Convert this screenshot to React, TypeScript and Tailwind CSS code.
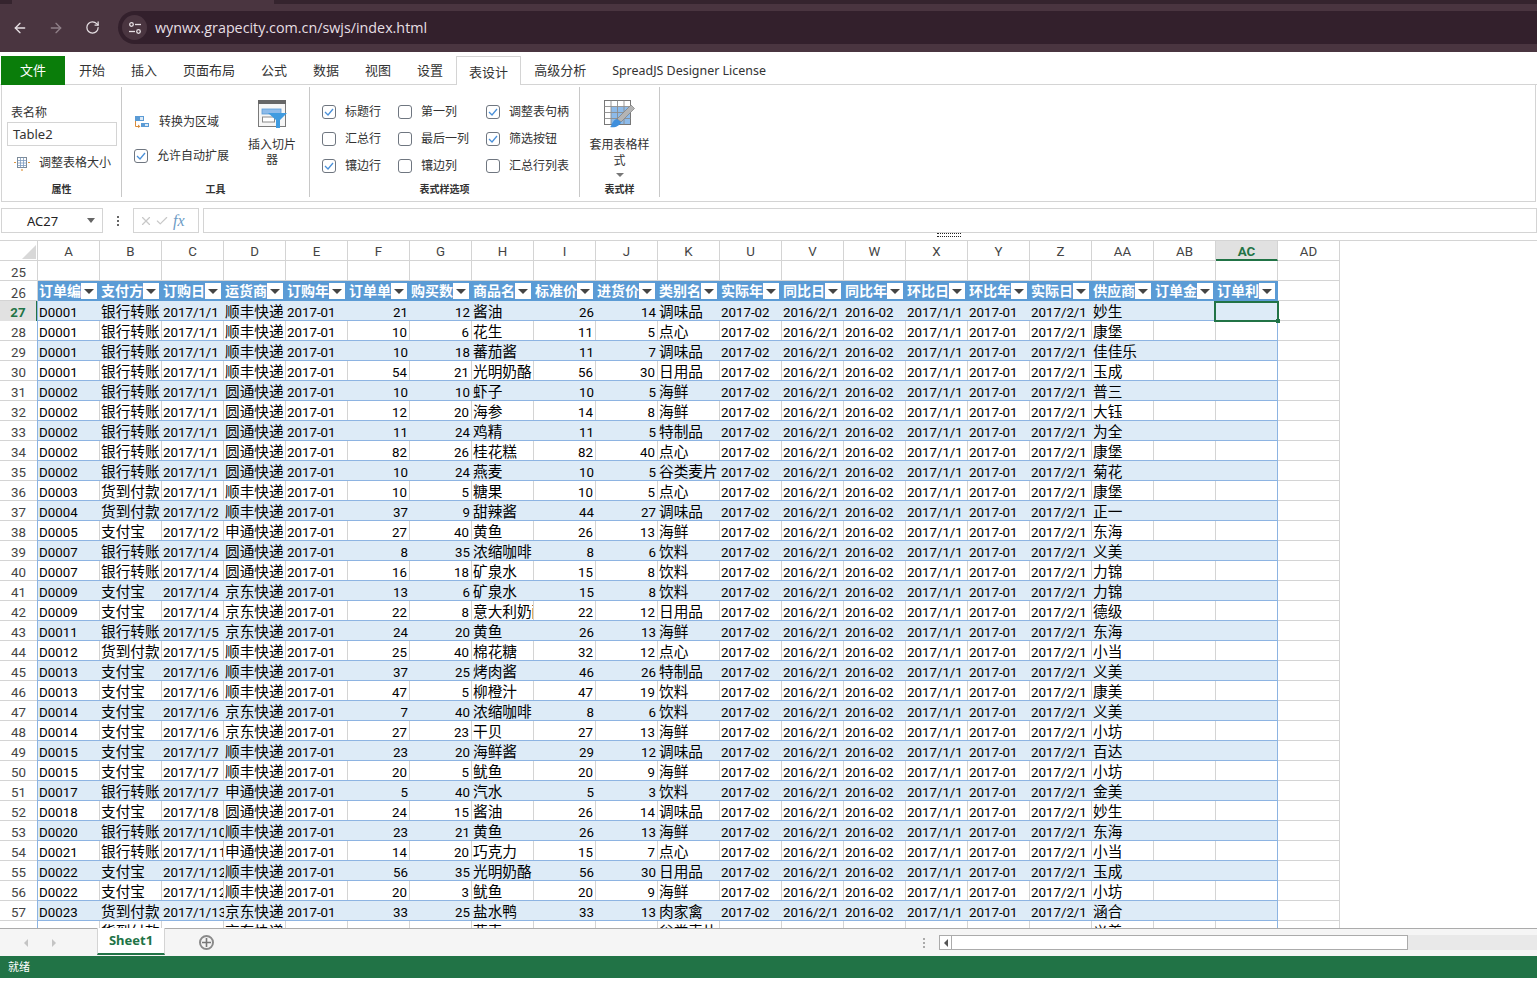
import React from "react";
import { ArrowLeft, ArrowRight, RotateCw, Check, X } from "lucide-react";

const uiFont = "font-['Noto_Sans','Noto_Sans_CJK_SC',sans-serif]";

const columns = ["A", "B", "C", "D", "E", "F", "G", "H", "I", "J", "K", "U", "V", "W", "X", "Y", "Z", "AA", "AB", "AC"];
const headers = ["订单编号", "支付方式", "订购日期", "运货商", "订购年月", "订单单价", "购买数量", "商品名称", "标准价格", "进货价格", "类别名称", "实际年月", "同比日期", "同比年月", "环比日期", "环比年月", "实际日期", "供应商", "订单金额", "订单利润"];

// id, pay, date, carrier, price, qty, product, std, cost, category, supplier
const rows: [string, string, string, string, number, number, string, number, number, string, string][] = [
  ["D0001", "银行转账", "2017/1/1", "顺丰快递", 21, 12, "酱油", 26, 14, "调味品", "妙生"],
  ["D0001", "银行转账", "2017/1/1", "顺丰快递", 10, 6, "花生", 11, 5, "点心", "康堡"],
  ["D0001", "银行转账", "2017/1/1", "顺丰快递", 10, 18, "蕃茄酱", 11, 7, "调味品", "佳佳乐"],
  ["D0001", "银行转账", "2017/1/1", "顺丰快递", 54, 21, "光明奶酪", 56, 30, "日用品", "玉成"],
  ["D0002", "银行转账", "2017/1/1", "圆通快递", 10, 10, "虾子", 10, 5, "海鲜", "普三"],
  ["D0002", "银行转账", "2017/1/1", "圆通快递", 12, 20, "海参", 14, 8, "海鲜", "大钰"],
  ["D0002", "银行转账", "2017/1/1", "圆通快递", 11, 24, "鸡精", 11, 5, "特制品", "为全"],
  ["D0002", "银行转账", "2017/1/1", "圆通快递", 82, 26, "桂花糕", 82, 40, "点心", "康堡"],
  ["D0002", "银行转账", "2017/1/1", "圆通快递", 10, 24, "燕麦", 10, 5, "谷类麦片", "菊花"],
  ["D0003", "货到付款", "2017/1/1", "顺丰快递", 10, 5, "糖果", 10, 5, "点心", "康堡"],
  ["D0004", "货到付款", "2017/1/2", "顺丰快递", 37, 9, "甜辣酱", 44, 27, "调味品", "正一"],
  ["D0005", "支付宝", "2017/1/2", "申通快递", 27, 40, "黄鱼", 26, 13, "海鲜", "东海"],
  ["D0007", "银行转账", "2017/1/4", "圆通快递", 8, 35, "浓缩咖啡", 8, 6, "饮料", "义美"],
  ["D0007", "银行转账", "2017/1/4", "圆通快递", 16, 18, "矿泉水", 15, 8, "饮料", "力锦"],
  ["D0009", "支付宝", "2017/1/4", "京东快递", 13, 6, "矿泉水", 15, 8, "饮料", "力锦"],
  ["D0009", "支付宝", "2017/1/4", "京东快递", 22, 8, "意大利奶酪", 22, 12, "日用品", "德级"],
  ["D0011", "银行转账", "2017/1/5", "京东快递", 24, 20, "黄鱼", 26, 13, "海鲜", "东海"],
  ["D0012", "货到付款", "2017/1/5", "顺丰快递", 25, 40, "棉花糖", 32, 12, "点心", "小当"],
  ["D0013", "支付宝", "2017/1/6", "顺丰快递", 37, 25, "烤肉酱", 46, 26, "特制品", "义美"],
  ["D0013", "支付宝", "2017/1/6", "顺丰快递", 47, 5, "柳橙汁", 47, 19, "饮料", "康美"],
  ["D0014", "支付宝", "2017/1/6", "京东快递", 7, 40, "浓缩咖啡", 8, 6, "饮料", "义美"],
  ["D0014", "支付宝", "2017/1/6", "京东快递", 27, 23, "干贝", 27, 13, "海鲜", "小坊"],
  ["D0015", "支付宝", "2017/1/7", "顺丰快递", 23, 20, "海鲜酱", 29, 12, "调味品", "百达"],
  ["D0015", "支付宝", "2017/1/7", "顺丰快递", 20, 5, "鱿鱼", 20, 9, "海鲜", "小坊"],
  ["D0017", "银行转账", "2017/1/7", "申通快递", 5, 40, "汽水", 5, 3, "饮料", "金美"],
  ["D0018", "支付宝", "2017/1/8", "圆通快递", 24, 15, "酱油", 26, 14, "调味品", "妙生"],
  ["D0020", "银行转账", "2017/1/10", "顺丰快递", 23, 21, "黄鱼", 26, 13, "海鲜", "东海"],
  ["D0021", "银行转账", "2017/1/11", "申通快递", 14, 20, "巧克力", 15, 7, "点心", "小当"],
  ["D0022", "支付宝", "2017/1/12", "顺丰快递", 56, 35, "光明奶酪", 56, 30, "日用品", "玉成"],
  ["D0022", "支付宝", "2017/1/12", "顺丰快递", 20, 3, "鱿鱼", 20, 9, "海鲜", "小坊"],
  ["D0023", "货到付款", "2017/1/13", "京东快递", 33, 25, "盐水鸭", 33, 13, "肉家禽", "涵合"],
  ["D0024", "货到付款", "2017/1/14", "京东快递", 10, 24, "燕麦", 10, 5, "谷类麦片", "义美"],
];

const Tune = () => (
  <svg width="14" height="14" viewBox="0 0 14 14" fill="none" stroke="#e6dfe3" strokeWidth="1.3">
    <circle cx="3.5" cy="3.5" r="1.8" />
    <path d="M7 3.5h6" />
    <circle cx="10.5" cy="10.5" r="1.8" />
    <path d="M1 10.5h6" />
  </svg>
);

const ConvertIcon = () => (
  <svg width="14" height="12" viewBox="0 0 14 12" className="shrink-0">
    <rect x="0" y="0" width="9" height="5" fill="#5b9bd5" />
    <rect x="5" y="1" width="3" height="3" fill="#dbe9f6" />
    <path d="M0.5 5v5.5h4" fill="none" stroke="#d98b3a" strokeWidth="1" />
    <path d="M3 8.5l2.5 2-2.5 1.5z" fill="#d98b3a" />
    <rect x="6" y="7" width="8" height="4" fill="#5b9bd5" />
    <rect x="10" y="8" width="3" height="2" fill="#dbe9f6" />
  </svg>
);

const ResizeIcon = () => (
  <svg width="16" height="16" viewBox="0 0 16 16" className="shrink-0">
    <rect x="3.5" y="2.5" width="9" height="10" fill="#fff" stroke="#7d8b99" />
    <path d="M3.5 5.5h9M3.5 8h9M3.5 10.5h9M6.5 2.5v10M9.5 2.5v10" stroke="#7d9cc0" strokeWidth="0.8" />
    <path d="M0 7.5h2M14 7.5h2M8 14v2" stroke="#e0963c" strokeWidth="1.2" />
  </svg>
);

const SlicerIcon = () => (
  <svg width="29" height="28" viewBox="0 0 29 28">
    <rect x="0.5" y="0.5" width="27" height="26" fill="#f6f6f6" stroke="#7a7a7a" />
    <rect x="0" y="0" width="28" height="4" fill="#666" />
    <rect x="4" y="9" width="19" height="5" fill="#8dbbea" stroke="#5b9bd5" strokeWidth="0.8" />
    <rect x="4.5" y="17" width="12" height="5" fill="#fff" stroke="#8a8a8a" />
    <path d="M10 13h19l-7 7v8h-4v-8z" fill="#3f9be0" />
  </svg>
);

const StyleIcon = () => (
  <svg width="31" height="28" viewBox="0 0 31 28">
    <rect x="0.5" y="0.5" width="26" height="24" fill="#fff" stroke="#777" />
    <rect x="7" y="7" width="19" height="17" fill="#8dbbea" />
    <path d="M0.5 6.5h26M0.5 12.5h26M0.5 18.5h26M7 0.5v24M13.5 0.5v24M20 0.5v24" stroke="#8c8c8c" strokeWidth="0.9" />
    <path d="M13 19L27 5l3.5 3.5L17 22z" fill="#b4b4b4" stroke="#7d7d7d" strokeWidth="0.7" />
    <path d="M6 27c2-1 2-7 7-8l4 3c-1 4-6 6-11 5z" fill="#3f8fdc" />
  </svg>
);

const Box = ({ checked }: { checked?: boolean }) => (
  <span className="w-[14px] h-[14px] shrink-0 rounded-[3px] border border-[#6f7680] bg-white flex items-center justify-center">
    {checked && (
      <svg width="10" height="8" viewBox="0 0 10 8" fill="none" stroke="#4a90d9" strokeWidth="1.3">
        <path d="M1 4l3 3 5-6" />
      </svg>
    )}
  </span>
);

const Option = ({ label, checked }: { label: string; checked?: boolean }) => (
  <div className="flex items-center gap-[9px] h-[27px] whitespace-nowrap">
    <Box checked={checked} />
    <span>{label}</span>
  </div>
);

const RibbonGroup = ({ label, width, children }: { label: string; width: string; children: React.ReactNode }) => (
  <div className={`${width} h-[110px] mt-[2px] border-r border-[#c8c8c8] flex flex-col`}>
    <div className="flex-1 min-h-0">{children}</div>
    <div className="h-[17px] text-center text-[10px] font-bold leading-[19px] text-[#333]">{label}</div>
  </div>
);

const Ribbon = () => (
  <div className="h-[117px] mx-px border border-t-0 border-[#d4d4d4] flex text-[12px] text-[#333]">
    <RibbonGroup label="属性" width="w-[120px]">
      <div className="pt-[18px]">
        <div className="pl-[9px] leading-[16px]">表名称</div>
        <div className="ml-[5px] mt-px w-[110px] h-[24px] border border-[#d4d4d4] pl-[5px] text-[13px] leading-[22px]">Table2</div>
        <div className="flex items-center pl-[12px] mt-[8px] gap-[9px] whitespace-nowrap">
          <ResizeIcon />
          <span>调整表格大小</span>
        </div>
      </div>
    </RibbonGroup>
    <RibbonGroup label="工具" width="w-[188px]">
      <div className="flex">
        <div className="pl-[12px] w-[124px] pt-[26px]">
          <div className="flex items-center gap-[10px] h-[18px] pl-px whitespace-nowrap">
            <ConvertIcon />
            <span>转换为区域</span>
          </div>
          <div className="flex items-center gap-[9px] mt-[16px] whitespace-nowrap">
            <Box checked />
            <span>允许自动扩展</span>
          </div>
        </div>
        <div className="w-[52px] flex flex-col items-center pt-[13px] text-center leading-[15px]">
          <SlicerIcon />
          <div className="mt-[9px]">插入切片器</div>
        </div>
      </div>
    </RibbonGroup>
    <RibbonGroup label="表式样选项" width="w-[270px]">
      <div className="flex pl-[12px] pt-[11px]">
        <div className="w-[76px]">
          <Option label="标题行" checked />
          <Option label="汇总行" />
          <Option label="镶边行" checked />
        </div>
        <div className="w-[88px]">
          <Option label="第一列" />
          <Option label="最后一列" />
          <Option label="镶边列" />
        </div>
        <div>
          <Option label="调整表句柄" checked />
          <Option label="筛选按钮" checked />
          <Option label="汇总行列表" />
        </div>
      </div>
    </RibbonGroup>
    <RibbonGroup label="表式样" width="w-[80px]">
      <div className="flex flex-col items-center pt-[13px] text-center leading-[16px]">
        <StyleIcon />
        <div className="mt-[9px] w-[62px]">套用表格样式</div>
        <span className="mt-[4px] w-0 h-0 border-x-[4px] border-x-transparent border-t-[4px] border-t-[#777]" />
      </div>
    </RibbonGroup>
  </div>
);

const FilterButton = () => (
  <span className="absolute right-[3px] top-[2px] w-[16px] h-[16px] bg-white flex items-center justify-center">
    <span className="w-0 h-0 border-x-[5px] border-x-transparent border-t-[5px] border-t-[#444]" />
  </span>
);

const RowHead = ({ n, active }: { n: number; active?: boolean }) => (
  <div
    className={`w-[38px] shrink-0 h-full pt-[4px] flex items-center justify-center border-r text-[13.3px] ${
      active ? "bg-[#e1e1e1] text-[#217346] font-bold border-r-2 border-[#217346]" : "text-[#444] border-[#d4d4d4] border-b border-b-[#d4d4d4]"
    }`}
  >
    {n}
  </div>
);

const Cell = ({ text, cjk, right, band }: { text?: string | number; cjk?: boolean; right?: boolean; band: boolean }) => (
  <div
    className={`w-[62px] shrink-0 h-full overflow-hidden whitespace-nowrap flex items-center text-black ${
      cjk ? "pt-[2px] pl-px text-[14.67px]" : "pt-[4px] text-[13.3px]"
    } ${right ? "justify-end pr-[2px]" : "pl-px"} ${band ? "" : "border-r border-[#d4d4d4]"}`}
  >
    {text}
  </div>
);

const DataRow = ({ row, n }: { row: (typeof rows)[number]; n: number }) => {
  const band = n % 2 === 1;
  const [id, pay, date, carrier, price, qty, product, std, cost, category, supplier] = row;
  return (
    <div className="flex h-[20px] font-['Roboto','Noto_Sans_CJK_SC',sans-serif]">
      <RowHead n={n} active={n === 27} />
      <div className={`flex h-full border-l border-r border-b border-[#8db4e2] -ml-px ${band ? "bg-[#ddebf7]" : "bg-white"}`}>
        <Cell band={band} text={id} />
        <Cell band={band} text={pay} cjk />
        <Cell band={band} text={date} />
        <Cell band={band} text={carrier} cjk />
        <Cell band={band} text="2017-01" />
        <Cell band={band} text={price} right />
        <Cell band={band} text={qty} right />
        <Cell band={band} text={product} cjk />
        <Cell band={band} text={std} right />
        <Cell band={band} text={cost} right />
        <Cell band={band} text={category} cjk />
        <Cell band={band} text="2017-02" />
        <Cell band={band} text="2016/2/1" />
        <Cell band={band} text="2016-02" />
        <Cell band={band} text="2017/1/1" />
        <Cell band={band} text="2017-01" />
        <Cell band={band} text="2017/2/1" />
        <Cell band={band} text={supplier} cjk />
        <Cell band={band} />
        <div className="relative w-[61px] shrink-0 h-full">
          {n === 27 && (
            <div className="absolute -left-[2px] top-0 w-[65px] h-[21px] border-2 border-[#217346]">
              <span className="absolute -right-[3px] -bottom-[3px] w-[4px] h-[4px] bg-[#217346]" />
            </div>
          )}
        </div>
      </div>
      <div className="w-[62px] shrink-0 h-full border-r border-b border-[#d4d4d4]" />
    </div>
  );
};

const Grid = () => (
  <div className="flex-1 min-h-0 overflow-hidden bg-white border-t border-[#d4d4d4]">
    <div className="flex h-[20px] font-['Roboto','Noto_Sans_CJK_SC',sans-serif] text-[13.3px] text-[#444]">
      <div className="relative w-[38px] shrink-0 border-r border-b border-[#d4d4d4]">
        <span className="absolute right-px bottom-px w-0 h-0 border-l-[14px] border-l-transparent border-b-[14px] border-b-[#d8d8d8]" />
      </div>
      {[...columns, "AD"].map((c) => (
        <div
          key={c}
          className={`w-[62px] shrink-0 pt-[3px] flex items-center justify-center border-r ${
            c === "AC" ? "bg-[#e1e1e1] text-[#217346] font-bold border-b-2 border-b-[#217346] border-r-[#d4d4d4]" : "border-b border-[#d4d4d4]"
          }`}
        >
          {c}
        </div>
      ))}
    </div>
    <div className="flex h-[20px] font-['Roboto','Noto_Sans_CJK_SC',sans-serif]">
      <RowHead n={25} />
      {[...columns, "AD"].map((c) => (
        <div key={c} className="w-[62px] shrink-0 border-r border-b border-[#d4d4d4]" />
      ))}
    </div>
    <div className="flex h-[20px] font-['Noto_Sans_CJK_SC',sans-serif]">
      <RowHead n={26} />
      <div className="flex h-full bg-[#5b9bd5] text-white text-[14px] font-bold">
        {headers.map((h) => (
          <div key={h} className="relative w-[62px] shrink-0 overflow-hidden whitespace-nowrap leading-[18px] pl-px">
            {h}
            <FilterButton />
          </div>
        ))}
      </div>
      <div className="w-[62px] shrink-0 h-full border-r border-b border-[#d4d4d4]" />
    </div>
    {rows.map((r, i) => (
      <DataRow key={i} row={r} n={27 + i} />
    ))}
  </div>
);

export default function App() {
  return (
    <div className={`h-[982px] overflow-hidden flex flex-col bg-white ${uiFont}`}>
      {/* browser chrome */}
      <div className="h-[52px] shrink-0 bg-[#4a3540] flex flex-col text-[#e6dfe3]">
        <div className="h-[4px] shrink-0 flex">
          <div className="w-[12px] bg-[#35242e]" />
          <div className="w-[262px]" />
          <div className="flex-1 bg-[#35242e]" />
        </div>
        <div className="flex-1 flex items-center pb-px">
          <ArrowLeft size={16} className="ml-[12px]" />
          <ArrowRight size={16} className="ml-[20px] text-[#8f7f88]" />
          <RotateCw size={15} className="ml-[21px]" />
          <div className="ml-[18px] h-[33px] flex-1 rounded-l-full bg-[#33202c] flex items-center pl-[4px]">
            <span className="w-[25px] h-[25px] rounded-full bg-[#4a3540] flex items-center justify-center">
              <Tune />
            </span>
            <span className="ml-[8px] text-[14.3px] font-['Open_Sans',sans-serif]">wynwx.grapecity.com.cn/swjs/index.html</span>
          </div>
        </div>
      </div>

      {/* ribbon tabs */}
      <div className="h-[33px] shrink-0 flex items-end pl-px text-[13px] text-[#333] border-b border-[#d4d4d4]">
        <div className="w-[64px] h-[29px] mb-[-1px] bg-[#0a7d0a] text-white flex items-center justify-center">文件</div>
        <div className="w-px" />
        {["开始", "插入", "页面布局", "公式", "数据", "视图", "设置"].map((t) => (
          <div key={t} className="h-[29px] px-[13px] leading-[30px]">{t}</div>
        ))}
        <div className="h-[29px] mb-[-1px] px-[12px] bg-white border border-b-0 border-[#d4d4d4] leading-[31px]">表设计</div>
        <div className="h-[29px] px-[13px] leading-[30px]">高级分析</div>
        <div className="h-[29px] px-[13px] leading-[32px] text-[12.45px]">SpreadJS Designer License</div>
      </div>

      <Ribbon />

      {/* formula bar */}
      <div className="h-[38px] shrink-0 relative">
        <div className="flex items-center pt-[6px] pl-px text-[13px] text-[#222]">
          <div className="w-[102px] h-[25px] border border-[#d4d4d4] flex items-center pl-[25px] justify-between pr-[7px] leading-[25px]">
            <span className="pt-px">AC27</span>
            <span className="w-0 h-0 border-x-[4px] border-x-transparent border-t-[5px] border-t-[#666]" />
          </div>
          <div className="w-[30px] flex flex-col items-center gap-[2px]">
            <span className="w-[2px] h-[2px] bg-[#666]" />
            <span className="w-[2px] h-[2px] bg-[#666]" />
            <span className="w-[2px] h-[2px] bg-[#666]" />
          </div>
          <div className="w-[66px] h-[25px] border border-[#d4d4d4] flex items-center pl-[5px] gap-[2px] text-[#c8c8c8]">
            <X size={14} />
            <Check size={14} />
            <span className="ml-[2px] italic font-['Liberation_Serif',serif] text-[16px] text-[#6d9bc5]">fx</span>
          </div>
          <div className="ml-[4px] flex-1 h-[25px] border border-[#d4d4d4]" />
        </div>
        <div className="absolute left-[937px] bottom-[3px] w-[24px] h-[4px] border-y border-dotted border-[#222]" />
      </div>

      <Grid />

      {/* sheet tabs */}
      <div className="h-[28px] shrink-0 bg-[#f5f5f5] border-t border-[#ababab] flex relative">
        <div className="w-[97px] flex items-center pl-[24px] gap-[24px]">
          <span className="w-0 h-0 border-y-[4px] border-y-transparent border-r-[4px] border-r-[#c4c4c4]" />
          <span className="w-0 h-0 border-y-[4px] border-y-transparent border-l-[4px] border-l-[#c4c4c4]" />
        </div>
        <div className="w-[68px] h-[27px] bg-white border-x border-[#d4d4d4] border-b-2 border-b-[#217346] text-[#217346] text-[13px] font-bold flex items-center justify-center -mt-px">Sheet1</div>
        <div className="ml-[34px] self-center w-[15px] h-[15px] rounded-full border-2 border-[#8a8a8a] flex items-center justify-center text-[#777]">
          <svg width="9" height="9" viewBox="0 0 9 9" stroke="currentColor" strokeWidth="1.6"><path d="M4.5 0v9M0 4.5h9" /></svg>
        </div>
        <div className="ml-[703px] self-center w-[14px] flex flex-col items-center gap-[2px]">
          <span className="w-[2px] h-[2px] bg-[#aaa]" />
          <span className="w-[2px] h-[2px] bg-[#aaa]" />
          <span className="w-[2px] h-[2px] bg-[#aaa]" />
        </div>
        <div className="ml-[8px] self-center flex-1 h-[15px] bg-[#e9e9e9] flex">
          <div className="w-[469px] h-full bg-white border border-[#ababab] flex">
            <div className="w-[12px] border-r border-[#ababab] flex items-center justify-center">
              <span className="w-0 h-0 border-y-[4px] border-y-transparent border-r-[4px] border-r-[#555]" />
            </div>
          </div>
        </div>
      </div>

      {/* status */}
      <div className="h-[22px] shrink-0 bg-[#217346] text-white text-[11px] leading-[22px] pl-[8px]">就绪</div>
      <div className="h-[4px] shrink-0" />
    </div>
  );
}
